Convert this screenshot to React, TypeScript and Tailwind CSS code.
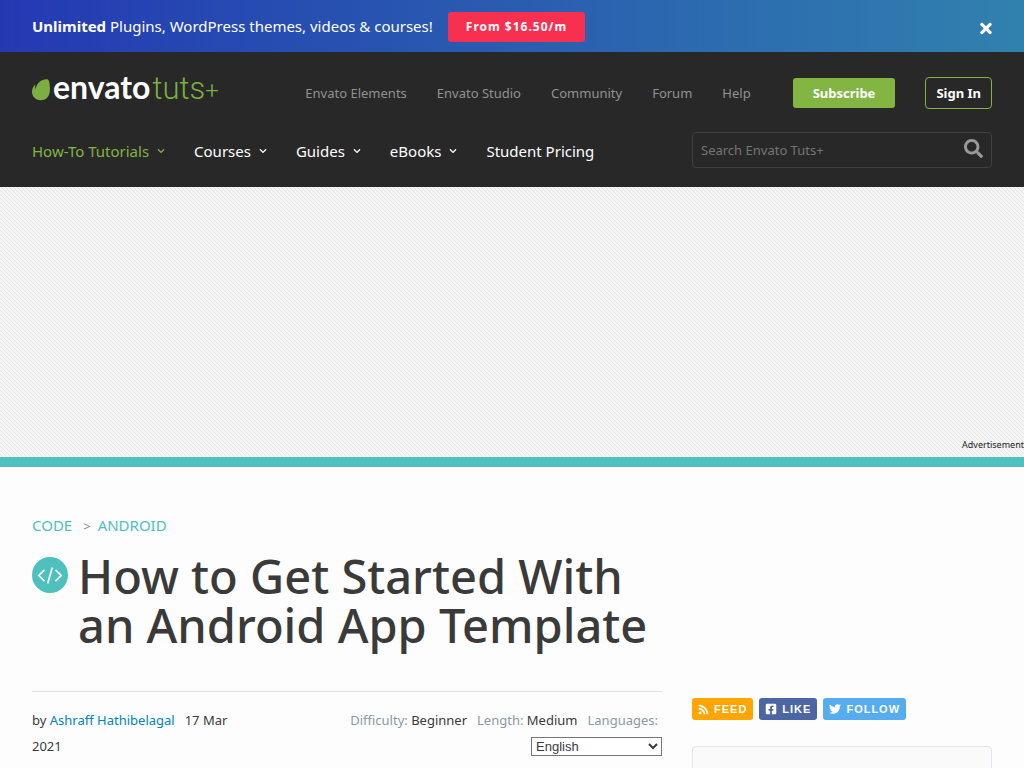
import type { ReactNode } from "react";
import { FaChevronDown, FaFacebookSquare, FaRss, FaSearch, FaTimes, FaTwitter } from "react-icons/fa";

const secondaryLinks = ["Envato Elements", "Envato Studio", "Community", "Forum", "Help"];

const primaryLinks = [
  { label: "How-To Tutorials", menu: true, active: true },
  { label: "Courses", menu: true, active: false },
  { label: "Guides", menu: true, active: false },
  { label: "eBooks", menu: true, active: false },
  { label: "Student Pricing", menu: false, active: false },
];

function Banner() {
  return (
    <div className="flex h-[52px] items-center bg-linear-to-r from-[#2538b3] via-[#2a5cb0] to-[#3181ae] px-8 text-white">
      <p className="pr-[15px] text-[15px]">
        <strong className="font-bold">Unlimited</strong> Plugins, WordPress themes, videos &amp; courses!
      </p>
      <a
        href="#pricing"
        className="mt-[2px] flex h-[30px] items-center rounded-[3px] bg-[#f8304f] px-[18px] text-[12px] font-bold tracking-[1px]"
      >
        From $16.50/m
      </a>
      <button type="button" aria-label="Close banner" className="mt-1 ml-auto">
        <FaTimes className="h-[17px] w-3" />
      </button>
    </div>
  );
}

function Logo() {
  return (
    <a href="#home" className="flex h-[32px] items-start">
      <svg width="19" height="22" viewBox="0 0 19 22" className="mt-[4px] shrink-0">
        <path
          d="M15.9.5c-.9-.5-3.400 0-6.500 1.100C4 5 3.900 9.800 3.900 10c0 .2-.2.100-.2.100-1-1.700-.4-3.400-.3-3.800.1-.6-.5-.7-.7-.4C-1 10.500-.3 14.700 1.200 17.200c1.800 3 4.900 4.300 8 4.100 5.300-.3 8.100-4.400 8.600-8.900C18.400 7.500 17.200 1.300 15.900.5z"
          fill="#7cae40"
        />
      </svg>
      <span className="flex items-baseline leading-6">
        <span className="ml-[2px] font-['Lato',sans-serif] text-[32px] font-bold text-white">envato</span>
        <span className="ml-[2px] font-['Roboto',sans-serif] text-[31px] font-light text-[#7cae40]">tuts</span>
        <span className="font-['Roboto',sans-serif] text-[24px] font-light text-[#7cae40]">+</span>
      </span>
    </a>
  );
}

function Header() {
  return (
    <header className="bg-[#282828] px-8 pt-[21px] pb-[19px]">
      <div className="flex items-center">
        <Logo />
        <nav aria-label="Secondary" className="ml-auto flex gap-[30px] pt-[6px] text-[13px] text-[#929292]">
          {secondaryLinks.map((label) => (
            <a key={label} href="#site">
              {label}
            </a>
          ))}
        </nav>
        <a
          href="#subscribe"
          className="mt-1 ml-[42px] flex h-[30px] items-center rounded-[3px] bg-[#82b541] px-5 pt-[2px] text-[13px] font-bold text-white"
        >
          Subscribe
        </a>
        <a
          href="#signin"
          className="mt-1 ml-[30px] flex h-8 items-center rounded-[4px] border border-[#82b541] px-[10px] pt-[2px] text-[13px] font-bold text-white"
        >
          Sign In
        </a>
      </div>
      <div className="mt-[23px] flex items-center justify-between">
        <nav aria-label="Primary" className="flex gap-[29px] pt-[2px] text-[15px] text-white">
          {primaryLinks.map((item) => (
            <a
              key={item.label}
              href="#menu"
              className={item.active ? "flex items-center gap-2 text-[#82b541]" : "flex items-center gap-2"}
            >
              {item.label}
              {item.menu && <FaChevronDown size={8} />}
            </a>
          ))}
        </nav>
        <form className="flex h-9 w-[300px] items-center rounded-[4px] border border-[#404040] px-2">
          <input
            type="search"
            aria-label="Search Envato Tuts+"
            placeholder="Search Envato Tuts+"
            className="min-w-0 flex-1 bg-transparent pt-[2px] text-[13px] text-white outline-none placeholder:text-[#757575]"
          />
          <button type="button" aria-label="Search" className="mb-1 text-[#999999]">
            <FaSearch size={19} />
          </button>
        </form>
      </div>
    </header>
  );
}

function Badge({ color, children }: { color: string; children: ReactNode }) {
  return (
    <a
      href="#share"
      className={`flex h-[22px] items-center gap-[5px] rounded-[3px] px-[6px] font-['Liberation_Sans',Arial,sans-serif] text-[11px] font-bold tracking-[1px] text-white ${color}`}
    >
      {children}
    </a>
  );
}

function CodeIcon() {
  return (
    <svg width="36" height="36" viewBox="0 0 36 36" className="mt-[5px] shrink-0" aria-hidden="true">
      <circle cx="18" cy="18" r="18" fill="#4ec1be" />
      <path d="M12.500 12.800L6.800 18.500L12.500 24.200M23.500 12.800L29.200 18.500L23.500 24.200M20.300 10.500L15.700 26.500" fill="none" stroke="#fff" strokeWidth="1.700" />
    </svg>
  );
}

function Article() {
  return (
    <main className="px-8 pt-[46px]">
      <nav aria-label="Breadcrumb" className="flex h-6 items-center text-[15px] leading-6 text-[#4ec1be]">
        <a href="#code">CODE</a>
        <span className="mr-[7px] ml-[11px] pt-[2px] text-[13px] text-[#888888]">&gt;</span>
        <a href="#android">ANDROID</a>
      </nav>
      <div className="mt-[15px] flex max-w-[630px] gap-[10px]">
        <CodeIcon />
        <h1 className="text-[47px] leading-[49px] font-medium text-[#3a3a3a]">How to Get Started With an Android App Template</h1>
      </div>
      <div className="mt-[41px] flex gap-[30px]">
        <div className="flex flex-1 justify-between border-t border-[#e1e1e1] pt-[15px] text-[13px] leading-[26px] text-[#3a3a3a]">
          <p className="w-[220px]">
            by{" "}
            <a href="#author" className="text-[#0085b6]">
              Ashraff Hathibelagal
            </a>
            <span className="ml-[10px]">17 Mar 2021</span>
          </p>
          <div className="flex flex-col items-end">
            <div className="flex gap-[10px] pr-1 text-[#8a9aa5]">
              <span>
                Difficulty: <span className="text-[#3a3a3a]">Beginner</span>
              </span>
              <span>
                Length: <span className="text-[#3a3a3a]">Medium</span>
              </span>
              <label htmlFor="language">Languages:</label>
            </div>
            <select
              id="language"
              className="mt-1 h-[19px] w-[131px] border border-[#767676] bg-white font-['Liberation_Sans',Arial,sans-serif] text-[13px] leading-4 text-[#3a3a3a]"
            >
              <option>English</option>
            </select>
          </div>
        </div>
        <aside className="w-[300px] pt-[7px]">
          <div className="flex gap-[6px]">
            <Badge color="bg-[#ffa500]">
              <FaRss size={11} />
              FEED
            </Badge>
            <Badge color="bg-[#4c66a4]">
              <FaFacebookSquare size={12} />
              LIKE
            </Badge>
            <Badge color="bg-[#55acee]">
              <FaTwitter size={12} />
              FOLLOW
            </Badge>
          </div>
          <div className="mt-[26px] h-[250px] rounded-[4px] border border-[#dfe5ea] bg-[#fafafa]" />
        </aside>
      </div>
    </main>
  );
}

export default function App() {
  return (
    <div className="h-screen overflow-hidden bg-[#fdfdfd] font-['Noto_Sans','Open_Sans',sans-serif]">
      <Banner />
      <Header />
      <section
        aria-label="Advertisement"
        className="flex h-[280px] items-end justify-end border-b-10 border-[#4ec1be] bg-[#f5f5f5] bg-[linear-gradient(45deg,#e5e5e5_12.5%,transparent_12.5%,transparent_50%,#e5e5e5_50%,#e5e5e5_62.5%,transparent_62.5%)] bg-size-[4px_4px] pb-1 text-[9px] leading-4 text-[#222222]"
      >
        Advertisement
      </section>
      <Article />
    </div>
  );
}
